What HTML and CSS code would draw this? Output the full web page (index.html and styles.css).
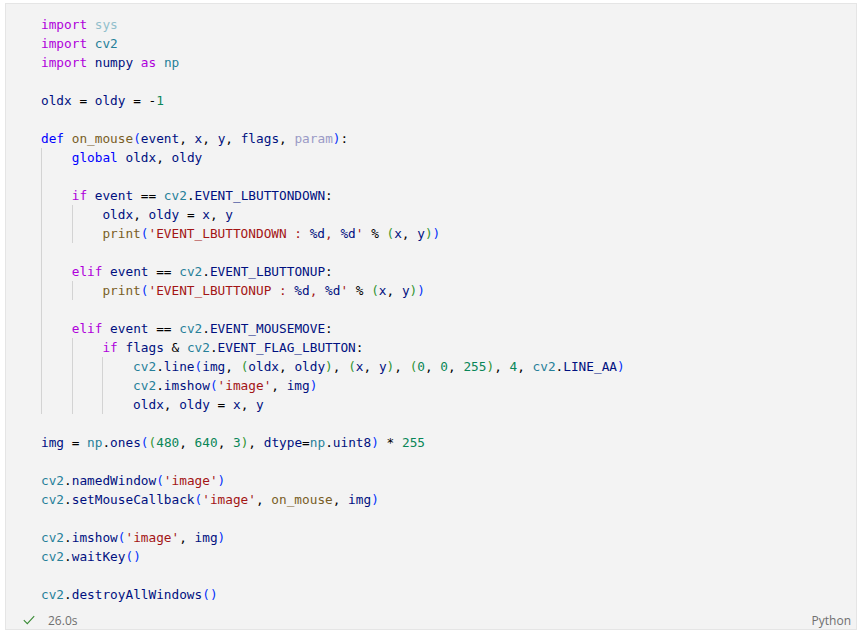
FILE: index.html
```html
<!DOCTYPE html>
<html>
<head>
<meta charset="utf-8">
<link rel="stylesheet" href="styles.css">
</head>
<body>
<div class="cell">
  <div class="code">
    <div class="ln"><span class="k">import</span> <span class="mf">sys</span></div>
    <div class="ln"><span class="k">import</span> <span class="m">cv2</span></div>
    <div class="ln"><span class="k">import</span> <span class="v">numpy</span> <span class="k">as</span> <span class="m">np</span></div>
    <div class="ln"></div>
    <div class="ln"><span class="v">oldx</span> = <span class="v">oldy</span> = -<span class="n">1</span></div>
    <div class="ln"></div>
    <div class="ln"><span class="d">def</span> <span class="f">on_mouse</span><span class="b1">(</span><span class="v">event</span>, <span class="v">x</span>, <span class="v">y</span>, <span class="v">flags</span>, <span class="vf">param</span><span class="b1">)</span>:</div>
    <div class="blk">
      <div class="ln"><span class="d">global</span> <span class="v">oldx</span>, <span class="v">oldy</span></div>
      <div class="ln"></div>
      <div class="ln"><span class="k">if</span> <span class="v">event</span> == <span class="m">cv2</span>.<span class="v">EVENT_LBUTTONDOWN</span>:</div>
      <div class="blk">
        <div class="ln"><span class="v">oldx</span>, <span class="v">oldy</span> = <span class="v">x</span>, <span class="v">y</span></div>
        <div class="ln"><span class="f">print</span><span class="b1">(</span><span class="s">'EVENT_LBUTTONDOWN : </span><span class="ph">%d</span><span class="s">, </span><span class="ph">%d</span><span class="s">'</span> % <span class="b2">(</span><span class="v">x</span>, <span class="v">y</span><span class="b2">)</span><span class="b1">)</span></div>
      </div>
      <div class="ln"></div>
      <div class="ln"><span class="k">elif</span> <span class="v">event</span> == <span class="m">cv2</span>.<span class="v">EVENT_LBUTTONUP</span>:</div>
      <div class="blk">
        <div class="ln"><span class="f">print</span><span class="b1">(</span><span class="s">'EVENT_LBUTTONUP : </span><span class="ph">%d</span><span class="s">, </span><span class="ph">%d</span><span class="s">'</span> % <span class="b2">(</span><span class="v">x</span>, <span class="v">y</span><span class="b2">)</span><span class="b1">)</span></div>
      </div>
      <div class="ln"></div>
      <div class="ln"><span class="k">elif</span> <span class="v">event</span> == <span class="m">cv2</span>.<span class="v">EVENT_MOUSEMOVE</span>:</div>
      <div class="blk">
        <div class="ln"><span class="k">if</span> <span class="v">flags</span> &amp; <span class="m">cv2</span>.<span class="v">EVENT_FLAG_LBUTTON</span>:</div>
        <div class="blk">
          <div class="ln"><span class="m">cv2</span>.<span class="v">line</span><span class="b1">(</span><span class="v">img</span>, <span class="b2">(</span><span class="v">oldx</span>, <span class="v">oldy</span><span class="b2">)</span>, <span class="b2">(</span><span class="v">x</span>, <span class="v">y</span><span class="b2">)</span>, <span class="b2">(</span><span class="n">0</span>, <span class="n">0</span>, <span class="n">255</span><span class="b2">)</span>, <span class="n">4</span>, <span class="m">cv2</span>.<span class="v">LINE_AA</span><span class="b1">)</span></div>
          <div class="ln"><span class="m">cv2</span>.<span class="v">imshow</span><span class="b1">(</span><span class="s">'image'</span>, <span class="v">img</span><span class="b1">)</span></div>
          <div class="ln"><span class="v">oldx</span>, <span class="v">oldy</span> = <span class="v">x</span>, <span class="v">y</span></div>
        </div>
      </div>
    </div>
    <div class="ln"></div>
    <div class="ln"><span class="v">img</span> = <span class="m">np</span>.<span class="v">ones</span><span class="b1">(</span><span class="b2">(</span><span class="n">480</span>, <span class="n">640</span>, <span class="n">3</span><span class="b2">)</span>, <span class="v">dtype</span>=<span class="m">np</span>.<span class="v">uint8</span><span class="b1">)</span> * <span class="n">255</span></div>
    <div class="ln"></div>
    <div class="ln"><span class="m">cv2</span>.<span class="v">namedWindow</span><span class="b1">(</span><span class="s">'image'</span><span class="b1">)</span></div>
    <div class="ln"><span class="m">cv2</span>.<span class="v">setMouseCallback</span><span class="b1">(</span><span class="s">'image'</span>, <span class="f">on_mouse</span>, <span class="v">img</span><span class="b1">)</span></div>
    <div class="ln"></div>
    <div class="ln"><span class="m">cv2</span>.<span class="v">imshow</span><span class="b1">(</span><span class="s">'image'</span>, <span class="v">img</span><span class="b1">)</span></div>
    <div class="ln"><span class="m">cv2</span>.<span class="v">waitKey</span><span class="b1">()</span></div>
    <div class="ln"></div>
    <div class="ln"><span class="m">cv2</span>.<span class="v">destroyAllWindows</span><span class="b1">()</span></div>
  </div>
  <div class="status">
    <div class="run">
      <svg class="check" width="12" height="10" viewBox="0 0 12 10"><path d="M0.8 5.2 L4.3 8.6 L11.2 1.2" fill="none" stroke="#388a34" stroke-width="1.1"/></svg>
      <span class="time">26.0s</span>
    </div>
    <span class="lang">Python</span>
  </div>
</div>
</body>
</html>
```

FILE: styles.css
```css
html, body {
  margin: 0;
  padding: 0;
  background: #ffffff;
}
.cell {
  margin: 3px 0 0 5px;
  width: 850px;
  height: 625px;
  border: 1px solid #e5e5e5;
  background: #f3f3f3;
  display: flex;
  flex-direction: column;
}
.code {
  padding: 11px 0 0 35px;
  font-family: "DejaVu Sans Mono", "Liberation Mono", monospace;
  font-size: 12.75px;
  line-height: 19px;
  color: #000000;
}
.ln {
  height: 19px;
  white-space: pre;
}
.blk {
  border-left: 1px solid #d3d3d3;
  padding-left: calc(4ch - 1px);
}
.k { color: #af00db; }
.d { color: #0000ff; }
.m { color: #267f99; }
.mf { color: #92bfcc; }
.v { color: #001080; }
.vf { color: #9a9ac6; }
.f { color: #795e26; }
.s { color: #a31515; }
.ph { color: #001080; }
.n { color: #098658; }
.b1 { color: #0431fa; }
.b2 { color: #319331; }
.status {
  margin-top: auto;
  height: 18px;
  display: flex;
  align-items: center;
  justify-content: space-between;
  padding: 0 5px 0 17px;
  font-family: "Open Sans", "Noto Sans", sans-serif;
  font-size: 12px;
  color: #6f6f6f;
}
.run {
  display: flex;
  align-items: center;
  gap: 13px;
}
.check {
  display: block;
}
```
